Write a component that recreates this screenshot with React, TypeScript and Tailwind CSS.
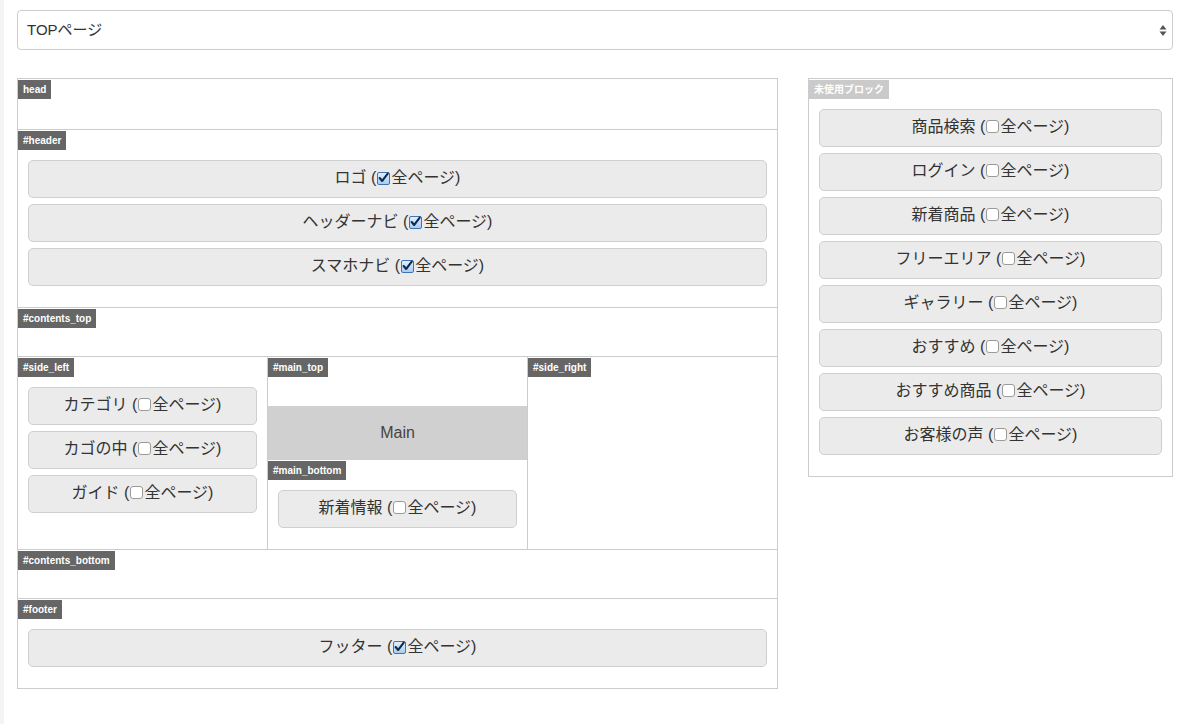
import React from "react";

type Block = { name: string; all: boolean };

const FONT = {
  fontFamily: '"Liberation Sans", "Noto Sans CJK JP", sans-serif',
};

function Check({ checked }: { checked: boolean }) {
  if (checked) {
    return (
      <span className="mx-[1px] inline-flex h-[13px] w-[13px] items-center justify-center rounded-[2px] border border-[#3f73b5] bg-gradient-to-b from-[#e4f0fb] to-[#a9ccef] align-[-1px]">
        <svg width="12" height="12" viewBox="0 0 12 12" className="-mt-[2px]">
          <path
            d="M1.8 6 L4.6 9.2 L10.6 1.2"
            fill="none"
            stroke="#0d2a50"
            strokeWidth="2.3"
            strokeLinecap="round"
            strokeLinejoin="round"
          />
        </svg>
      </span>
    );
  }
  return (
    <span className="mx-[1px] inline-block h-[13px] w-[13px] rounded-[3px] border border-[#9a9a9a] bg-white align-[-1px]" />
  );
}

function BlockButton({ b }: { b: Block }) {
  return (
    <div className="mb-[6px] flex h-[38px] items-center justify-center rounded-[5px] border border-[#cfcfcf] bg-[#ebebeb] pb-[3px] text-[16px] text-[#333]">
      <span className="leading-none">
        {b.name} (
        <Check checked={b.all} />
        全ページ)
      </span>
    </div>
  );
}

function Label({ text, light }: { text: string; light?: boolean }) {
  return (
    <div
      className={`mt-[1px] block h-[19px] w-fit px-[5px] text-[10px] font-bold leading-[19px] text-white ${
        light ? "bg-[#cacaca]" : "bg-[#666]"
      }`}
    >
      {text}
    </div>
  );
}

function Area({
  label,
  blocks = [],
  className = "",
}: {
  label: string;
  blocks?: Block[];
  className?: string;
}) {
  return (
    <div className={`min-h-[49px] ${className}`}>
      <Label text={label} />
      {blocks.length > 0 && (
        <div className="px-[10px] pb-[15px] pt-[10px]">
          {blocks.map((b) => (
            <BlockButton key={b.name} b={b} />
          ))}
        </div>
      )}
    </div>
  );
}

const header: Block[] = [
  { name: "ロゴ", all: true },
  { name: "ヘッダーナビ", all: true },
  { name: "スマホナビ", all: true },
];

const sideLeft: Block[] = [
  { name: "カテゴリ", all: false },
  { name: "カゴの中", all: false },
  { name: "ガイド", all: false },
];

const unused: Block[] = [
  { name: "商品検索", all: false },
  { name: "ログイン", all: false },
  { name: "新着商品", all: false },
  { name: "フリーエリア", all: false },
  { name: "ギャラリー", all: false },
  { name: "おすすめ", all: false },
  { name: "おすすめ商品", all: false },
  { name: "お客様の声", all: false },
];

export default function App() {
  return (
    <div
      className="min-h-[724px] border-l-[4px] border-[#f4f4f6] bg-white pl-[13px] pr-[14px] pt-[10px]"
      style={FONT}
    >
      <div className="flex h-[40px] w-[1156px] items-center justify-between rounded-[4px] border border-[#cdcdcd] bg-white pl-[9px] pr-[5px] text-[15px] text-[#333]">
        <span>TOPページ</span>
        <svg width="8" height="13" viewBox="0 0 8 13">
          <path d="M4 1 L7.5 5.5 L0.5 5.5 Z" fill="#555" />
          <path d="M4 12 L7.5 7.5 L0.5 7.5 Z" fill="#555" />
        </svg>
      </div>

      <div className="mt-[28px] flex items-start gap-[30px]">
        <div className="w-[761px] border border-[#cccccc]">
          <Area label="head" />
          <Area label="#header" blocks={header} className="border-t border-[#cccccc]" />
          <Area label="#contents_top" className="border-t border-[#cccccc]" />

          <div className="flex border-t border-[#cccccc]">
            <div className="w-[249px]">
              <Area label="#side_left" blocks={sideLeft} />
            </div>
            <div className="flex w-[261px] flex-col border-x border-[#cccccc]">
              <div className="h-[49px]">
                <Label text="#main_top" />
              </div>
              <div className="flex h-[54px] items-center justify-center bg-[#d0d0d0] text-[16px] text-[#444]">
                Main
              </div>
              <Area label="#main_bottom" blocks={[{ name: "新着情報", all: false }]} />
            </div>
            <div className="flex-1">
              <Label text="#side_right" />
            </div>
          </div>

          <Area label="#contents_bottom" className="border-t border-[#cccccc]" />
          <Area
            label="#footer"
            blocks={[{ name: "フッター", all: true }]}
            className="border-t border-[#cccccc]"
          />
        </div>

        <div className="w-[365px] border border-[#cccccc]">
          <Label text="未使用ブロック" light />
          <div className="px-[10px] pb-[15px] pt-[10px]">
            {unused.map((b) => (
              <BlockButton key={b.name} b={b} />
            ))}
          </div>
        </div>
      </div>
    </div>
  );
}
